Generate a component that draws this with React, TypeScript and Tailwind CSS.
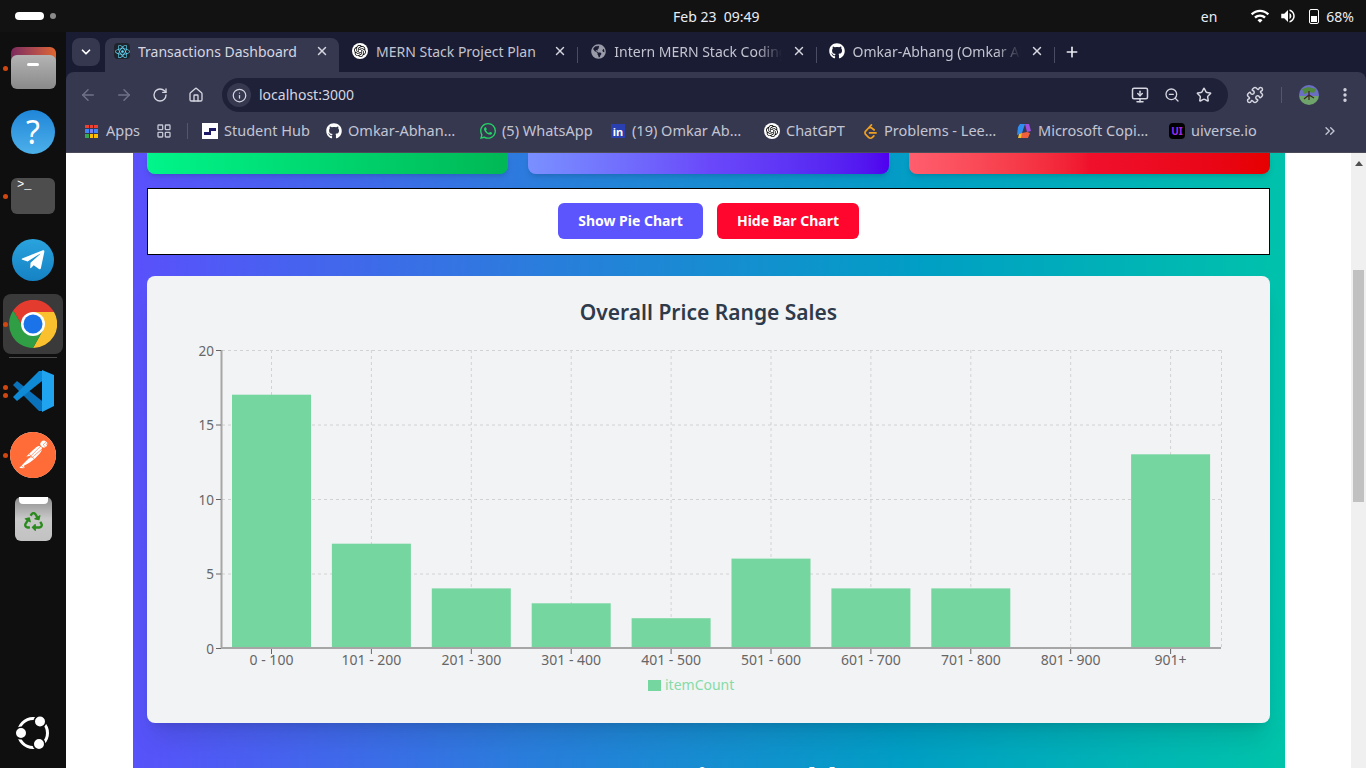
import type { ReactNode } from "react";
import {
  ArrowLeft,
  ArrowRight,
  ChevronDown,
  ChevronsRight,
  EllipsisVertical,
  House,
  Info,
  LayoutGrid,
  MonitorDown,
  Plus,
  Puzzle,
  RotateCw,
  Star,
  X,
  ZoomOut,
} from "lucide-react";
import { FaGithub, FaGlobeAmericas, FaReact, FaRecycle, FaTelegramPlane } from "react-icons/fa";
import { MdVolumeUp, MdWifi } from "react-icons/md";
import { SiLeetcode, SiOpenai, SiPostman, SiWhatsapp } from "react-icons/si";

// Chart data
const bars = [
  { label: "0 - 100", count: 17 },
  { label: "101 - 200", count: 7 },
  { label: "201 - 300", count: 4 },
  { label: "301 - 400", count: 3 },
  { label: "401 - 500", count: 2 },
  { label: "501 - 600", count: 6 },
  { label: "601 - 700", count: 4 },
  { label: "701 - 800", count: 4 },
  { label: "801 - 900", count: 0 },
  { label: "901+", count: 13 },
];
const yTicks = [20, 15, 10, 5, 0];
const yOf = (v: number) => 648 - v * 14.9;
const barX = (i: number) => 232 + i * 99.9;

const OpenAiBadge = () => (
  <span className="flex h-4 w-4 items-center justify-center rounded-full bg-white text-black">
    <SiOpenai size={12} />
  </span>
);

const ChromeLogo = () => (
  <svg width="48" height="48" viewBox="0 0 48 48">
    <path d="M45 12A24 24 0 0 0 4.2 10.5L14 27 24 12Z" fill="#e33b2e" />
    <path d="M45 12A24 24 0 0 1 24 48L34 30 24 12Z" fill="#fbc02d" />
    <path d="M4.2 10.5A24 24 0 0 0 24 48L34 30 14 27Z" fill="#2f9e44" />
    <circle cx="24" cy="24" r="12" fill="#fff" />
    <circle cx="24" cy="24" r="9.5" fill="#1a73e8" />
  </svg>
);

const VsCodeLogo = () => (
  <svg width="42" height="42" viewBox="0 0 42 42">
    <path d="M1 15 5 11 30 31 30 41 27 41Z" fill="#0a72bb" />
    <path d="M1 27 5 31 30 11 30 1 27 1Z" fill="#0e8ad6" />
    <path d="M30 0 42 5V36L30 42Z" fill="#20a4f0" />
  </svg>
);

const UbuntuLogo = () => (
  <svg width="36" height="36" viewBox="0 0 36 36">
    <circle cx="18" cy="18" r="14.5" fill="none" stroke="#fff" strokeWidth="3" />
    <circle cx="6" cy="18" r="5.8" fill="#fff" stroke="#0f0f0f" strokeWidth="1.6" />
    <circle cx="25" cy="6.5" r="5.8" fill="#fff" stroke="#0f0f0f" strokeWidth="1.6" />
    <circle cx="24" cy="29" r="5.8" fill="#fff" stroke="#0f0f0f" strokeWidth="1.6" />
  </svg>
);

// One launcher slot, with the orange running dots on its left
const DockSlot = ({ children, dots = 0 }: { children: ReactNode; dots?: number }) => (
  <div className="relative flex h-16 w-full items-center justify-center">
    {dots > 0 && (
      <div className="absolute top-0 bottom-0 left-[3px] flex flex-col justify-center gap-[3px]">
        {Array.from({ length: dots }).map((_, i) => (
          <span key={i} className="h-[5px] w-[5px] rounded-full bg-[#d2470f]" />
        ))}
      </div>
    )}
    {children}
  </div>
);

const Dock = () => (
  <aside className="flex h-full w-[66px] shrink-0 flex-col items-center bg-[#0f0f0f] pt-[4px]">
    <DockSlot dots={1}>
      <div className="relative h-[42px] w-[45px]">
        <div className="h-4 w-full rounded-t-md bg-gradient-to-r from-[#7c2a5d] to-[#e0662a]" />
        <div className="absolute inset-x-0 top-[8px] bottom-0 rounded-md bg-gradient-to-b from-[#b4b4b4] to-[#8a8a8a]">
          <div className="mx-auto mt-2 h-[3px] w-3 rounded-sm bg-white" />
        </div>
      </div>
    </DockSlot>
    <DockSlot>
      <div className="flex h-[44px] w-[44px] items-center justify-center rounded-full bg-gradient-to-b from-[#1f86d8] to-[#4cb0ea] text-[32px] leading-none text-white">
        ?
      </div>
    </DockSlot>
    <DockSlot dots={1}>
      <div className="h-9 w-[44px] rounded-md bg-[#4d4d4d] px-1.5 font-['Liberation_Mono',monospace] text-[12px] leading-[14px] text-white">
        &gt;_
      </div>
    </DockSlot>
    <DockSlot>
      <div className="flex h-[42px] w-[42px] items-center justify-center rounded-full bg-gradient-to-b from-[#2aa3dd] to-[#1582c4] text-white">
        <FaTelegramPlane size={26} />
      </div>
    </DockSlot>
    <DockSlot dots={1}>
      <div className="flex h-[60px] w-[60px] items-center justify-center rounded-lg bg-[#3a3a3a]">
        <ChromeLogo />
      </div>
    </DockSlot>
    <div className="my-px h-px w-12 bg-[#4a4a4a]" />
    <DockSlot dots={2}>
      <VsCodeLogo />
    </DockSlot>
    <DockSlot dots={1}>
      <div className="flex h-[46px] w-[46px] items-center justify-center rounded-full bg-white text-[#ff6c37]">
        <SiPostman size={46} />
      </div>
    </DockSlot>
    <DockSlot>
      <div className="h-[44px] w-[37px] rounded-md bg-gradient-to-b from-[#8d8d8d] via-[#c9c9c9] to-[#c2c2c2]">
        <div className="mx-auto h-[7px] w-[29px] rounded-b-sm bg-white" />
        <div className="mt-[8px] flex justify-center text-[#2b8a1e]">
          <FaRecycle size={19} />
        </div>
      </div>
    </DockSlot>
    <div className="mt-auto mb-[17px]">
      <UbuntuLogo />
    </div>
  </aside>
);

const TopBar = () => (
  <header className="relative flex h-8 shrink-0 items-center bg-[#121212] text-[14px] text-[#e8eef5]">
    <div className="ml-[15px] h-2 w-[29px] rounded-full bg-white" />
    <div className="ml-[6px] h-[6px] w-[6px] rounded-full bg-[#8a8a8a]" />
    <div className="absolute left-[673px] whitespace-pre">Feb 23  09:49</div>
    <div className="ml-auto flex items-center pr-3">
      <span className="mr-[33px]">en</span>
      <MdWifi size={20} className="mr-[9px] text-white" />
      <MdVolumeUp size={18} className="mr-[12px] text-white" />
      <div className="mr-[7px] h-[15px] w-[10px] rounded-[2px] border border-white p-px">
        <div className="mt-[5px] h-[6px] bg-white" />
      </div>
      <span>68%</span>
    </div>
  </header>
);

const Tab = ({
  icon,
  title,
  active = false,
  divider = true,
  fade = false,
}: {
  icon: ReactNode;
  title: string;
  active?: boolean;
  divider?: boolean;
  fade?: boolean;
}) => (
  <div
    className={`relative flex h-[34px] shrink-0 items-center pb-2 pl-[9px] text-[14px] ${
      active ? "w-[234px] rounded-t-lg bg-[#363850] pr-[10px] text-[#d5d6e0]" : "w-[238.3px] pr-[14px] text-[#c3c4d0]"
    }`}
  >
    <span className="flex w-[16px] shrink-0 justify-center">{icon}</span>
    <span
      className={`ml-2 w-[168px] overflow-hidden whitespace-nowrap ${
        fade ? "[mask-image:linear-gradient(to_right,black_85%,transparent)]" : ""
      }`}
    >
      {title}
    </span>
    <X size={14} strokeWidth={2.5} className="ml-auto text-[#d5d6e0]" />
    {divider && <span className="absolute top-[9px] right-[3px] h-4 w-px bg-[#4a4c63]" />}
  </div>
);

const TabStrip = () => (
  <div className="flex h-10 shrink-0 items-end bg-[#1a1c33] pl-[6px]">
    <div className="mb-[6px] flex h-7 w-7 items-center justify-center rounded-lg bg-[#363850] text-white">
      <ChevronDown size={14} strokeWidth={3} />
    </div>
    <div className="ml-[5px] flex">
      <Tab
        active
        divider={false}
        title="Transactions Dashboard"
        icon={
          <span className="flex h-4 w-4 items-center justify-center rounded-sm bg-[#20232a] text-[#61dafb]">
            <FaReact size={15} />
          </span>
        }
      />
      <div className="w-1" />
      <Tab title="MERN Stack Project Plan" icon={<OpenAiBadge />} />
      <Tab fade title="Intern MERN Stack Coding" icon={<FaGlobeAmericas size={15} className="text-[#9a9ba8]" />} />
      <Tab fade title="Omkar-Abhang (Omkar Abhang)" icon={<FaGithub size={16} className="text-white" />} />
    </div>
    <Plus size={16} strokeWidth={2.5} className="mb-[12px] ml-[6px] text-[#e8e9f0]" />
  </div>
);

const Toolbar = () => (
  <div className="flex h-10 shrink-0 items-end rounded-t-lg bg-[#363850] text-[#d5d6e0]">
    <div className="flex h-[34px] w-[156px] shrink-0 items-center pl-[13px]">
      <ArrowLeft size={18} className="text-[#6f7186]" />
      <ArrowRight size={18} className="ml-[18px] text-[#6f7186]" />
      <RotateCw size={16} className="ml-[19px]" />
      <House size={16} className="ml-[20px]" />
    </div>
    <div className="flex h-[34px] w-[1006px] shrink-0 items-center rounded-full bg-[#1f2138] pr-4 pl-[5px]">
      <span className="flex h-6 w-6 items-center justify-center rounded-full bg-[#363850]">
        <Info size={15} />
      </span>
      <span className="ml-[8px] -mt-[2px] text-[14px] text-[#d5d6e0]">localhost:3000</span>
      <MonitorDown size={18} className="ml-auto" />
      <ZoomOut size={16} className="ml-[15px]" />
      <Star size={16} className="ml-[16px]" strokeWidth={2.2} />
    </div>
    <div className="flex h-[34px] flex-1 items-center pl-[18px]">
      <Puzzle size={18} />
      <span className="ml-[17px] h-4 w-px bg-[#54566d]" />
      <svg width="20" height="20" viewBox="0 0 20 20" className="ml-[17px]">
        <clipPath id="avatar">
          <circle cx="10" cy="10" r="10" />
        </clipPath>
        <g clipPath="url(#avatar)">
          <rect width="20" height="11" fill="#6a6fc4" />
          <rect y="11" width="20" height="9" fill="#6fa56b" />
          <path d="M3 4 9 2 17 4 15 8 10 7 5 9Z" fill="#4f8a3c" />
          <path d="M10 6V15M10 10 5 14M10 10 15 13" stroke="#3b2a20" strokeWidth="1.3" fill="none" />
        </g>
      </svg>
      <EllipsisVertical size={18} className="ml-[17px]" strokeWidth={2.5} />
    </div>
  </div>
);

const Bookmark = ({ icon, label, width, gap }: { icon: ReactNode; label: string; width: number; gap: number }) => (
  <div className="flex items-center" style={{ marginLeft: gap }}>
    <span className="flex w-4 shrink-0 justify-center">{icon}</span>
    <span className="ml-[6px] whitespace-nowrap" style={{ width }}>
      {label}
    </span>
  </div>
);

const BookmarksBar = () => (
  <div className="flex h-[41px] shrink-0 items-center border-b border-[#4a4a58] bg-[#363850] pb-[2px] text-[14.5px] text-[#c3c5d3]">
    <div className="ml-[19px] grid h-[13px] w-[13px] grid-cols-3 gap-px">
      {["#ea4335", "#ea4335", "#ea4335", "#4285f4", "#7a7ff0", "#4285f4", "#34a853", "#fbbc05", "#fbbc05"].map((c, i) => (
        <span key={i} style={{ backgroundColor: c }} />
      ))}
    </div>
    <span className="ml-[8px] w-[34px]">Apps</span>
    <LayoutGrid size={16} className="ml-[16px]" />
    <span className="ml-[15px] h-4 w-px bg-[#54566d]" />
    <Bookmark
      gap={14}
      width={85}
      label="Student Hub"
      icon={
        <svg width="16" height="16" viewBox="0 0 16 16">
          <rect width="16" height="16" fill="#fff" />
          <path d="M2 12V9H7V5H14V8H9V12Z" fill="#1f1a66" />
        </svg>
      }
    />
    <Bookmark gap={17} width={108} label="Omkar-Abhan…" icon={<FaGithub size={16} className="text-white" />} />
    <Bookmark gap={24} width={90} label="(5) WhatsApp" icon={<SiWhatsapp size={16} className="text-[#25d366]" />} />
    <Bookmark
      gap={18}
      width={112}
      label="(19) Omkar Ab…"
      icon={
        <span className="flex h-[14px] w-[14px] items-center justify-center bg-[#2a3fb0] text-[11px] leading-none font-bold text-white">
          in
        </span>
      }
    />
    <Bookmark gap={20} width={58} label="ChatGPT" icon={<OpenAiBadge />} />
    <Bookmark gap={18} width={114} label="Problems - Lee…" icon={<SiLeetcode size={15} className="text-[#f0a020]" />} />
    <Bookmark
      gap={18}
      width={113}
      label="Microsoft Copi…"
      icon={
        <svg width="16" height="16" viewBox="0 0 16 16">
          <path d="M4 1H9L6 10 1 12 2 4Z" fill="#2f8ef0" />
          <path d="M9 1H13L15 8 11 9Z" fill="#a24fe0" />
          <path d="M6 10 11 9 14 10 12 15H4Z" fill="#f0603c" />
          <path d="M3 11 6 10 5 15H2Z" fill="#f0c030" />
        </svg>
      }
    />
    <Bookmark
      gap={18}
      width={64}
      label="uiverse.io"
      icon={
        <span className="flex h-4 w-4 items-center justify-center rounded-sm bg-black text-[10px] leading-none font-bold text-[#9a2cf0]">
          UI
        </span>
      }
    />
    <ChevronsRight size={16} className="ml-[67px]" />
  </div>
);

const Chart = () => (
  <svg viewBox="147 340 1123 360" className="block h-[360px] w-full">
    {/* grid */}
    {yTicks.slice(0, 4).map((t) => (
      <line key={t} x1={222} x2={1221} y1={yOf(t) + 0.5} y2={yOf(t) + 0.5} stroke="#d2d2d2" strokeDasharray="3 3" />
    ))}
    {bars.map((b, i) => (
      <line key={b.label} x1={barX(i) + 39.5} x2={barX(i) + 39.5} y1={350} y2={648} stroke="#d2d2d2" strokeDasharray="3 3" />
    ))}
    <line x1={1221.5} x2={1221.5} y1={350} y2={648} stroke="#d2d2d2" strokeDasharray="3 3" />
    {/* bars */}
    {bars.map((b, i) => (
      <rect key={b.label} x={barX(i)} y={yOf(b.count)} width={79} height={b.count * 14.9} fill="#75d6a0" />
    ))}
    {/* axes */}
    <line x1={221.5} x2={221.5} y1={350} y2={649} stroke="#a6a6a6" strokeWidth={2} />
    <line x1={221} x2={1221} y1={648} y2={648} stroke="#a6a6a6" strokeWidth={2} />
    {yTicks.map((t) => (
      <g key={t}>
        <line x1={216} x2={221} y1={yOf(t) + 0.5} y2={yOf(t) + 0.5} stroke="#666" />
        <text x={214} y={yOf(t) + 5.5} textAnchor="end" fontSize={13.5} fill="#666">
          {t}
        </text>
      </g>
    ))}
    {bars.map((b, i) => (
      <g key={b.label}>
        <line x1={barX(i) + 39.5} x2={barX(i) + 39.5} y1={649} y2={654} stroke="#666" />
        <text x={barX(i) + 39.5} y={665} textAnchor="middle" fontSize={14} fill="#666">
          {b.label}
        </text>
      </g>
    ))}
    {/* legend */}
    <rect x={648} y={680} width={13} height={11} fill="#75d6a0" />
    <text x={665} y={690} fontSize={14} fill="#85dca8">
      itemCount
    </text>
  </svg>
);

const Page = () => (
  <div className="flex min-h-0 flex-1 bg-white">
    <div className="ml-[67px] h-full w-[1152px] shrink-0 overflow-hidden bg-[linear-gradient(92deg,#5a50fc_0%,#2a7ddc_35%,#009fc4_68%,#00c4aa_100%)] pr-[15px] pl-[14px]">
      <div className="grid h-[21px] grid-cols-3 gap-[20px]">
        <div className="rounded-b-lg bg-gradient-to-r from-[#00f58a] to-[#00b855] shadow-md" />
        <div className="rounded-b-lg bg-gradient-to-r from-[#7a90ff] via-[#6a48fa] to-[#5000ee] shadow-md" />
        <div className="rounded-b-lg bg-gradient-to-r from-[#ff5e6e] via-[#f0102c] to-[#e60000] shadow-md" />
      </div>
      <div className="mt-[14px] flex h-[67px] items-center justify-center gap-[14px] border border-black bg-white pb-[2px] text-[14px] font-bold text-white">
        <button className="h-9 w-[145px] rounded-md bg-[#5c54fd]">Show Pie Chart</button>
        <button className="h-9 w-[142px] rounded-md bg-[#ff062e]">Hide Bar Chart</button>
      </div>
      <section className="mt-[21px] h-[447px] rounded-lg bg-[#f2f3f5] pt-[21px] shadow-xl">
        <h2 className="h-[43px] text-center text-[21px] leading-[30px] font-semibold text-[#2f3a4a]">
          Overall Price Range Sales
        </h2>
        <Chart />
      </section>
      <h2 className="mt-[37px] text-center text-[32px] leading-[40px] font-bold text-white">Transactions Table</h2>
    </div>
    <div className="ml-auto flex h-full w-[15px] flex-col items-center bg-[#f0f0f0]">
      <div className="mt-[8px] h-0 w-0 border-x-[4px] border-b-[5px] border-x-transparent border-b-[#505050]" />
      <div className="mt-[104px] h-[232px] w-[11px] bg-[#c1c1c1]" />
    </div>
  </div>
);

export default function App() {
  return (
    <div className="flex h-[768px] w-[1366px] flex-col overflow-hidden bg-[#121212] font-['Noto_Sans',sans-serif]">
      <TopBar />
      <div className="flex min-h-0 flex-1">
        <Dock />
        <main className="flex min-w-0 flex-1 flex-col bg-[#1a1c33]">
          <TabStrip />
          <Toolbar />
          <BookmarksBar />
          <Page />
        </main>
      </div>
    </div>
  );
}
